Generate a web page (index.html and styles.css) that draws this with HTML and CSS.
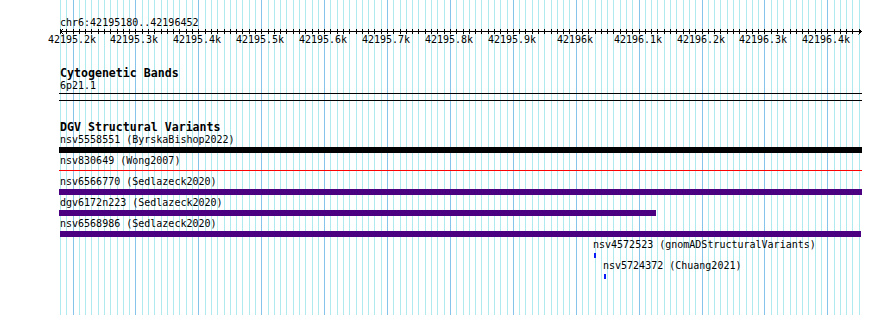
FILE: index.html
```html
<!DOCTYPE html>
<html>
<head>
<meta charset="utf-8">
<title>JBrowse view</title>
<link rel="stylesheet" href="styles.css">
</head>
<body>
<div class="page">
  <svg class="grid" id="grid" width="890" height="315" shape-rendering="crispEdges"></svg>
  <div class="content">
    <div class="locus">chr6:42195180..42196452</div>
    <svg class="ruler" id="ruler" width="890" height="18" shape-rendering="crispEdges"></svg>

    <section class="track cyto">
      <div class="track-label">Cytogenetic Bands</div>
      <div class="band-name">6p21.1</div>
      <div class="rule"></div>
      <div class="rule rule-second"></div>
    </section>

    <section class="track dgv">
      <div class="track-label">DGV Structural Variants</div>

      <div class="feature">
        <div class="feat-label">nsv5558551 (ByrskaBishop2022)</div>
        <div class="bar-row"><div class="bar bar-black" style="margin-left:59px;width:803px"></div></div>
      </div>

      <div class="feature">
        <div class="feat-label">nsv830649 (Wong2007)</div>
        <div class="bar-row"><div class="line-red" style="margin-left:59px;width:803px"></div></div>
      </div>

      <div class="feature">
        <div class="feat-label">nsv6566770 (Sedlazeck2020)</div>
        <div class="bar-row"><div class="bar bar-purple" style="margin-left:59px;width:803px"></div></div>
      </div>

      <div class="feature">
        <div class="feat-label">dgv6172n223 (Sedlazeck2020)</div>
        <div class="bar-row"><div class="bar bar-purple" style="margin-left:59px;width:597px"></div></div>
      </div>

      <div class="feature">
        <div class="feat-label">nsv6568986 (Sedlazeck2020)</div>
        <div class="bar-row"><div class="bar bar-purple" style="margin-left:60px;width:801px"></div></div>
      </div>

      <div class="feature">
        <div class="feat-label" style="padding-left:593px">nsv4572523 (gnomADStructuralVariants)</div>
        <div class="bar-row"><div class="bar bar-blue" style="margin-left:594px;width:2px"></div></div>
      </div>

      <div class="feature">
        <div class="feat-label" style="padding-left:603px">nsv5724372 (Chuang2021)</div>
        <div class="bar-row"><div class="bar bar-blue" style="margin-left:604px;width:2px"></div></div>
      </div>
    </section>
  </div>
</div>
<script src="script.js"></script>
</body>
</html>
```

FILE: styles.css
```css
html, body {
  margin: 0;
  padding: 0;
  background: #ffffff;
}

body {
  font-family: "DejaVu Sans Mono", monospace;
  font-size: 10px;
  color: #000000;
}

.page {
  position: relative;
  width: 890px;
  height: 315px;
  overflow: hidden;
}

.grid {
  position: absolute;
  top: 0;
  left: 0;
  z-index: 0;
}

.grid .minor {
  fill: #aeeaee;
}

.grid .major {
  fill: #86c4ec;
}

.content {
  position: relative;
  z-index: 1;
}

.locus {
  padding-top: 17px;
  padding-left: 60px;
  line-height: 12px;
  white-space: nowrap;
}

.ruler {
  display: block;
}

.ruler .axis {
  stroke: #000000;
  stroke-width: 1;
  fill: none;
}

.ruler .tick-label {
  font-family: "DejaVu Sans Mono", monospace;
  font-size: 10px;
  fill: #000000;
}

.track-label {
  font-weight: bold;
  font-size: 11.6px;
  padding-left: 60px;
  white-space: nowrap;
}

.cyto .track-label {
  margin-top: 20px;
  line-height: 13px;
}

.band-name {
  padding-left: 60px;
  line-height: 12px;
}

.rule {
  margin-top: 1px;
  margin-left: 59px;
  width: 803px;
  height: 1px;
  background: #000000;
}

.rule-second {
  margin-top: 6px;
}

.dgv .track-label {
  margin-top: 21px;
  line-height: 11px;
}

.feature {
  margin-bottom: 1px;
}

.feat-label {
  padding-left: 60px;
  line-height: 14px;
  height: 14px;
  white-space: nowrap;
}

.bar-row {
  height: 6px;
  display: flex;
  align-items: flex-start;
}

.bar {
  height: 6px;
}

.bar-black {
  background: #000000;
}

.bar-purple {
  background: #4b0082;
}

.bar-blue {
  height: 5px;
  margin-top: 1px;
  background: #0a1cf5;
}

.line-red {
  margin-top: 2px;
  height: 1px;
  background: #ff0000;
}
```

FILE: script.js
```js
(function () {
  var NS = "http://www.w3.org/2000/svg";
  var start = 42195180, end = 42196452;
  var x0 = 60, width = 800;
  var scale = width / (end - start);
  function px(bp) { return x0 + (bp - start) * scale; }

  var grid = document.getElementById("grid");
  var ruler = document.getElementById("ruler");

  for (var bp = start; bp <= 42196450; bp += 10) {
    var x = Math.round(px(bp));
    var major = bp % 100 === 0;
    var r = document.createElementNS(NS, "rect");
    r.setAttribute("x", x);
    r.setAttribute("y", 0);
    r.setAttribute("width", 1);
    r.setAttribute("height", 315);
    r.setAttribute("class", major ? "major" : "minor");
    grid.appendChild(r);

    var t = document.createElementNS(NS, "line");
    t.setAttribute("x1", x + 0.5);
    t.setAttribute("x2", x + 0.5);
    t.setAttribute("y1", 0);
    t.setAttribute("y2", 5);
    t.setAttribute("class", "axis");
    ruler.appendChild(t);

    if (major) {
      var lbl = document.createElementNS(NS, "text");
      var k = bp / 1000;
      var s = (bp % 1000 === 0) ? String(k) : k.toFixed(1);
      lbl.textContent = s + "k";
      lbl.setAttribute("x", x - 1);
      lbl.setAttribute("y", 14);
      lbl.setAttribute("text-anchor", "middle");
      lbl.setAttribute("class", "tick-label");
      ruler.appendChild(lbl);
    }
  }

  var axis = document.createElementNS(NS, "path");
  axis.setAttribute("d",
    "M60 2.5 H862 " +
    "M63.5 -0.5 L60.5 2.5 L63.5 5.5 " +
    "M858.5 -0.5 L861.5 2.5 L858.5 5.5");
  axis.setAttribute("class", "axis");
  axis.setAttribute("shape-rendering", "auto");
  ruler.appendChild(axis);
})();
```
